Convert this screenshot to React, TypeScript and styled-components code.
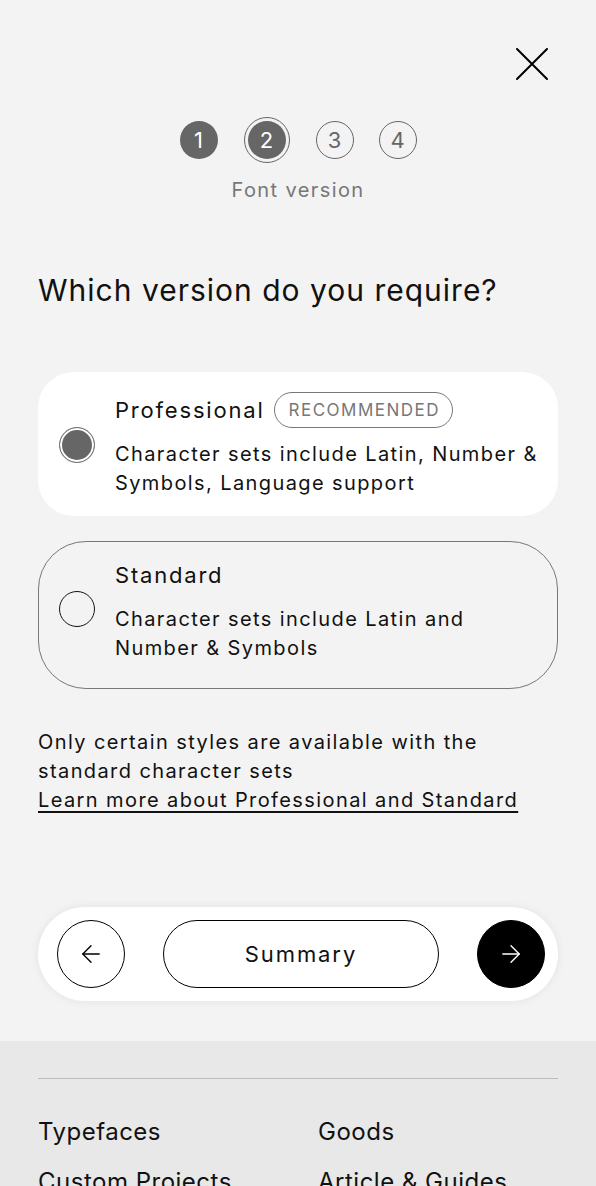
import styled, { createGlobalStyle } from 'styled-components';
import { ArrowLeft, ArrowRight } from 'lucide-react';

const GlobalStyle = createGlobalStyle`
  * {
    box-sizing: border-box;
  }
  body {
    margin: 0;
    background-color: #f3f3f3;
    font-family: Inter, 'Noto Sans', sans-serif;
    color: #111111;
    letter-spacing: 1.4px;
  }
`;

const PageWrapper = styled.div`
  width: 100%;
  min-height: 1186px;
  display: flex;
  flex-direction: column;
  background-color: #f3f3f3;
`;

const MainWrapper = styled.main`
  padding: 48px 38px 40px;
  display: flex;
  flex-direction: column;
`;

const CloseRow = styled.div`
  display: flex;
  justify-content: flex-end;
  padding-right: 10px;
`;

const CloseButton = styled.button`
  width: 32px;
  height: 32px;
  padding: 0;
  border: none;
  background: none;
  cursor: pointer;
  display: flex;
  align-items: center;
  justify-content: center;
`;

const StepsWrapper = styled.div`
  margin-top: 36px;
  display: flex;
  flex-direction: column;
  align-items: center;
  gap: 14px;
`;

const StepsRow = styled.ol`
  margin: 0;
  padding: 0;
  list-style: none;
  height: 48px;
  display: flex;
  align-items: center;
  gap: 25px;
`;

const Step = styled.li<{ $state: 'done' | 'current' | 'todo' }>`
  width: 38px;
  height: 38px;
  border-radius: 50%;
  display: flex;
  align-items: center;
  justify-content: center;
  font-size: 22px;
  letter-spacing: 0;
  color: ${({ $state }) => ($state === 'todo' ? '#666666' : '#ffffff')};
  background-color: ${({ $state }) => ($state === 'todo' ? 'transparent' : '#666666')};
  border: ${({ $state }) => ($state === 'todo' ? '1.5px solid #666666' : 'none')};
  outline: ${({ $state }) => ($state === 'current' ? '1.5px solid #666666' : 'none')};
  outline-offset: 3px;
  margin: ${({ $state }) => ($state === 'current' ? '0 5px' : '0')};
`;

const StepLabel = styled.span`
  font-size: 20px;
  line-height: 24px;
  letter-spacing: 1.4px;
  color: #777777;
`;

const Heading = styled.h1`
  margin: 70px 0 0;
  font-size: 30px;
  line-height: 36px;
  font-weight: 400;
  letter-spacing: 1px;
`;

const OptionsList = styled.div`
  margin-top: 64px;
  display: flex;
  flex-direction: column;
  gap: 25px;
`;

const OptionCard = styled.label<{ $selected: boolean }>`
  display: flex;
  align-items: center;
  gap: 20px;
  padding: ${({ $selected }) => ($selected ? '20px 14px 18px 21px' : '15px 14px 25px 20px')};
  border-radius: ${({ $selected }) => ($selected ? '36px' : '48px')};
  background-color: ${({ $selected }) => ($selected ? '#ffffff' : 'transparent')};
  border: ${({ $selected }) => ($selected ? 'none' : '1.5px solid #777777')};
  cursor: pointer;
`;

const Radio = styled.span<{ $checked: boolean }>`
  flex-shrink: 0;
  width: 36px;
  height: 36px;
  border-radius: 50%;
  border: 1.5px solid ${({ $checked }) => ($checked ? '#777777' : '#111111')};
  background-color: ${({ $checked }) => ($checked ? '#666666' : 'transparent')};
  box-shadow: ${({ $checked }) => ($checked ? 'inset 0 0 0 2px #ffffff' : 'none')};
  margin-top: ${({ $checked }) => ($checked ? '0' : '-2px')};
`;

const OptionContent = styled.div`
  display: flex;
  flex-direction: column;
  gap: 12px;
`;

const OptionTitleRow = styled.div`
  height: 36px;
  display: flex;
  align-items: center;
  gap: 9px;
`;

const OptionTitle = styled.span`
  font-size: 22px;
  letter-spacing: 1.8px;
`;

const Badge = styled.span`
  height: 36px;
  padding: 0 12px 0 14px;
  border: 1.5px solid #777777;
  border-radius: 18px;
  display: flex;
  align-items: center;
  font-size: 17px;
  letter-spacing: 1.5px;
  color: #777777;
  text-transform: uppercase;
`;

const OptionDescription = styled.p`
  margin: 0;
  font-size: 20px;
  line-height: 29px;
`;

const NoteWrapper = styled.div`
  margin-top: 39px;
  font-size: 20px;
  line-height: 29px;
`;

const NoteText = styled.p`
  margin: 0;
`;

const NoteLink = styled.a`
  color: #111111;
  text-decoration: underline;
  text-decoration-thickness: 1.5px;
  text-underline-offset: 4px;
`;

const NavBar = styled.nav`
  margin-top: 92px;
  height: 94px;
  padding: 13px 13px 13px 19px;
  border-radius: 47px;
  background-color: #ffffff;
  box-shadow: 0 0 10px rgba(0, 0, 0, 0.07);
  display: flex;
  align-items: center;
  gap: 38px;
`;

const RoundButton = styled.button<{ $variant: 'outline' | 'filled' }>`
  flex-shrink: 0;
  width: 68px;
  height: 68px;
  padding: 0;
  border-radius: 50%;
  border: 1.5px solid #000000;
  background-color: ${({ $variant }) => ($variant === 'filled' ? '#000000' : '#ffffff')};
  color: ${({ $variant }) => ($variant === 'filled' ? '#ffffff' : '#000000')};
  display: flex;
  align-items: center;
  justify-content: center;
  cursor: pointer;
`;

const SummaryButton = styled.button`
  flex: 1;
  height: 68px;
  border-radius: 34px;
  border: 1.5px solid #000000;
  background-color: #ffffff;
  font-family: inherit;
  letter-spacing: 1.9px;
  font-size: 22px;
  color: #111111;
  cursor: pointer;
`;

const Footer = styled.footer`
  flex: 1;
  background-color: #e8e8e8;
  padding: 37px 38px 0;
`;

const FooterDivider = styled.hr`
  margin: 0;
  border: none;
  border-top: 1px solid #bcbcbc;
`;

const FooterLinks = styled.ul`
  margin: 28px 0 0;
  padding: 0;
  list-style: none;
  display: grid;
  grid-template-columns: 280px 1fr;
`;

const FooterLink = styled.li`
  font-size: 24px;
  line-height: 50px;
  letter-spacing: 0.5px;
  white-space: nowrap;
`;

const steps: { n: number; state: 'done' | 'current' | 'todo' }[] = [
  { n: 1, state: 'done' },
  { n: 2, state: 'current' },
  { n: 3, state: 'todo' },
  { n: 4, state: 'todo' },
];

const options = [
  {
    id: 'professional',
    title: 'Professional',
    badge: 'Recommended',
    description: 'Character sets include Latin, Number & Symbols, Language support',
    selected: true,
  },
  {
    id: 'standard',
    title: 'Standard',
    badge: '',
    description: 'Character sets include Latin and Number & Symbols',
    selected: false,
  },
];

const footerLinks = ['Typefaces', 'Goods', 'Custom Projects', 'Article & Guides'];

const CloseIcon = () => (
  <svg width="32" height="32" viewBox="0 0 32 32" fill="none">
    <path d="M1 1L31 31M31 1L1 31" stroke="#000000" strokeWidth="2" strokeLinecap="round" />
  </svg>
);

const App = () => {
  return (
    <>
      <GlobalStyle />
      <PageWrapper>
        <MainWrapper>
          <CloseRow>
            <CloseButton aria-label="Close">
              <CloseIcon />
            </CloseButton>
          </CloseRow>
          <StepsWrapper>
            <StepsRow>
              {steps.map((step) => (
                <Step key={step.n} $state={step.state}>
                  {step.n}
                </Step>
              ))}
            </StepsRow>
            <StepLabel>Font version</StepLabel>
          </StepsWrapper>
          <Heading>Which version do you require?</Heading>
          <OptionsList>
            {options.map((option) => (
              <OptionCard key={option.id} $selected={option.selected}>
                <Radio $checked={option.selected} />
                <OptionContent>
                  <OptionTitleRow>
                    <OptionTitle>{option.title}</OptionTitle>
                    {option.badge && <Badge>{option.badge}</Badge>}
                  </OptionTitleRow>
                  <OptionDescription>{option.description}</OptionDescription>
                </OptionContent>
              </OptionCard>
            ))}
          </OptionsList>
          <NoteWrapper>
            <NoteText>Only certain styles are available with the standard character sets</NoteText>
            <NoteLink href="#">Learn more about Professional and Standard</NoteLink>
          </NoteWrapper>
          <NavBar>
            <RoundButton $variant="outline" aria-label="Back">
              <ArrowLeft size={28} strokeWidth={1.2} />
            </RoundButton>
            <SummaryButton>Summary</SummaryButton>
            <RoundButton $variant="filled" aria-label="Next">
              <ArrowRight size={28} strokeWidth={1.2} />
            </RoundButton>
          </NavBar>
        </MainWrapper>
        <Footer>
          <FooterDivider />
          <FooterLinks>
            {footerLinks.map((link) => (
              <FooterLink key={link}>{link}</FooterLink>
            ))}
          </FooterLinks>
        </Footer>
      </PageWrapper>
    </>
  );
};

export default App;
